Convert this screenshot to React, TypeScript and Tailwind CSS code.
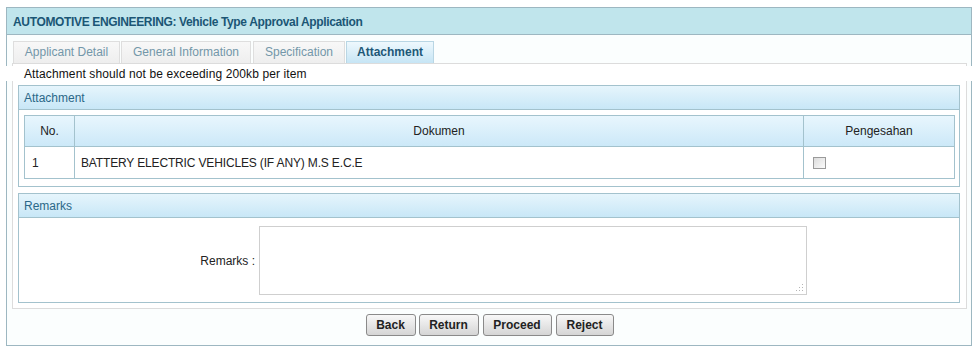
import React from "react";

const font = { fontFamily: '"Liberation Sans", Arial, sans-serif' };

function Tab({ label, active, className }: { label: string; active?: boolean; className?: string }) {
  return (
    <div
      className={
        "h-[22px] flex items-center justify-center border border-b-0 text-[12px] pb-[1px] " +
        (active
          ? "border-[#b9d6e4] bg-gradient-to-b from-[#eef8fd] to-[#c6e5f5] text-[#1d5877] font-bold "
          : "border-[#dedede] bg-gradient-to-b from-[#f8f8f8] to-[#eeeeee] text-[#7397a9] ") +
        (className || "")
      }
    >
      {label}
    </div>
  );
}

function BoxHeader({ label }: { label: string }) {
  return (
    <div className="h-[24px] border-b border-[#a3c2cd] bg-gradient-to-b from-[#e6f5fc] to-[#c8e7f7] px-[5px] flex items-center text-[12px] text-[#2b6888]">
      {label}
    </div>
  );
}

function Btn({ label, w }: { label: string; w: string }) {
  return (
    <button
      className={
        "h-[22px] border border-[#8a8a8a] rounded-[3px] bg-gradient-to-b from-[#f8f8f8] to-[#d5d5d5] text-[12px] font-bold text-[#222] flex items-center justify-center " +
        w
      }
    >
      {label}
    </button>
  );
}

export default function App() {
  return (
    <div className="w-[977px] h-[352px] bg-white overflow-hidden pt-[7px] pl-[6px]" style={font}>
      <div className="w-[966px] h-[339px] border border-[#9db7c1] bg-[#fbfefe] flex flex-col">
        <div className="h-[27px] shrink-0 bg-[#c0e5ec] border-b border-[#9db7c1] px-[6px] pt-[1px] flex items-center text-[12px] font-bold text-[#1b5675] tracking-[-0.35px]">
          AUTOMOTIVE ENGINEERING: Vehicle Type Approval Application
        </div>

        <div className="mt-[6px] ml-[6px] flex">
          <Tab label="Applicant Detail" className="w-[107px]" />
          <Tab label="General Information" className="w-[130px] ml-[1px]" />
          <Tab label="Specification" className="w-[92px] ml-[2px]" />
          <Tab label="Attachment" active className="w-[88px] ml-[1px]" />
        </div>

        <div className="ml-[5px] w-[955px] h-[246px] border border-[#dcdcdc] bg-white flex flex-col">
          <div className="mt-[2px] h-[15px] -ml-[13px] -mr-[11px] pl-[24px] bg-white leading-[16px] text-[12px] text-[#111] tracking-[0.12px] relative">
            Attachment should not be exceeding 200kb per item
          </div>

          <div className="mt-[4px] ml-[5px] w-[942px] h-[102px] border border-[#a3c2cd] flex flex-col">
            <BoxHeader label="Attachment" />
            <div className="pt-[5px] px-[5px]">
              <table className="w-[930px] border-collapse text-[12px] text-[#222] table-fixed">
                <colgroup>
                  <col className="w-[50px]" />
                  <col className="w-[729px]" />
                  <col className="w-[151px]" />
                </colgroup>
                <thead>
                  <tr className="h-[31px] bg-gradient-to-b from-[#e8f6fd] to-[#cbe8f8]">
                    <th className="border border-[#a3c2cd] font-normal text-center">No.</th>
                    <th className="border border-[#a3c2cd] font-normal text-center">Dokumen</th>
                    <th className="border border-[#a3c2cd] font-normal text-center">Pengesahan</th>
                  </tr>
                </thead>
                <tbody>
                  <tr className="h-[32px] bg-white">
                    <td className="border border-[#a3c2cd] pl-[7px]">1</td>
                    <td className="border border-[#a3c2cd] pl-[6px] tracking-[-0.15px]">BATTERY ELECTRIC VEHICLES (IF ANY) M.S E.C.E</td>
                    <td className="border border-[#a3c2cd] pl-[9px]">
                      <div className="w-[13px] h-[12px] border border-[#9a9a9a] bg-gradient-to-br from-[#dcdcdc] to-[#fbfbfb]" />
                    </td>
                  </tr>
                </tbody>
              </table>
            </div>
          </div>

          <div className="mt-[6px] ml-[5px] w-[942px] h-[110px] border border-[#a3c2cd] flex flex-col">
            <BoxHeader label="Remarks" />
            <div className="flex items-center pt-[8px]">
              <div className="w-[236px] text-right text-[12px] text-[#222]">Remarks :</div>
              <div className="relative ml-[4px] w-[548px] h-[69px]">
                <textarea className="w-full h-full border border-[#cfcfcf] bg-white outline-none resize-none block" />
                <svg className="absolute right-[3px] bottom-[3px]" width="9" height="9" viewBox="0 0 9 9">
                  <rect x="7" y="1" width="1" height="1" fill="#b5b5b5" />
                  <rect x="4" y="4" width="1" height="1" fill="#b5b5b5" />
                  <rect x="7" y="4" width="1" height="1" fill="#b5b5b5" />
                  <rect x="1" y="7" width="1" height="1" fill="#b5b5b5" />
                  <rect x="4" y="7" width="1" height="1" fill="#b5b5b5" />
                  <rect x="7" y="7" width="1" height="1" fill="#b5b5b5" />
                </svg>
              </div>
            </div>
          </div>
        </div>

        <div className="mt-[5px] flex justify-center gap-[3px] pl-[1px]">
          <Btn label="Back" w="w-[50px]" />
          <Btn label="Return" w="w-[60px]" />
          <Btn label="Proceed" w="w-[69px] ml-[1px]" />
          <Btn label="Reject" w="w-[58px] ml-[1px]" />
        </div>
      </div>
    </div>
  );
}
